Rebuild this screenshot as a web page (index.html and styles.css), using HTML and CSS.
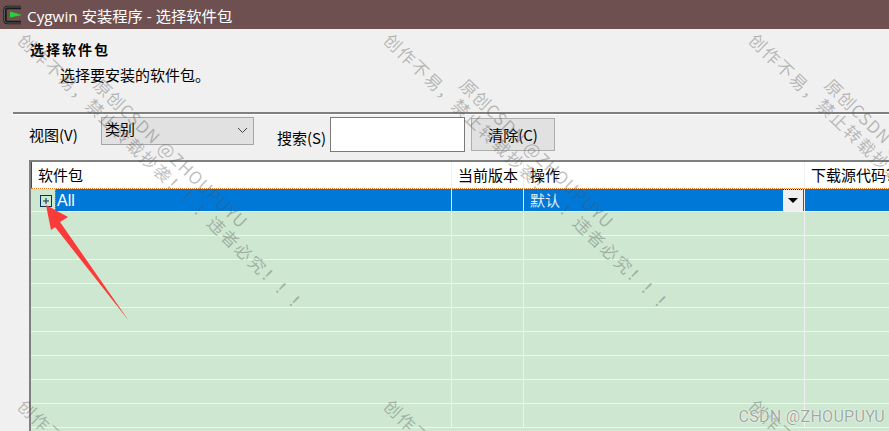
FILE: index.html
```html
<!DOCTYPE html>
<html lang="zh-CN">
<head>
<meta charset="utf-8">
<title>Cygwin 安装程序 - 选择软件包</title>
<link rel="stylesheet" href="styles.css">
</head>
<body>
<div class="window">
  <header class="titlebar">
    <svg class="app-icon" width="20" height="20" viewBox="0 0 20 20" aria-hidden="true">
      <path d="M18 2.500H4.500Q2 2.500 2 5V15Q2 17.500 4.500 17.500H18" fill="none" stroke="#1a1a1a" stroke-width="3.400"/>
      <path d="M18 2H4.500Q1.500 2 1.500 5V15Q1.500 18 4.500 18H18" fill="none" stroke="#6a6a6a" stroke-width="0.800"/>
      <path d="M7 6.500L19 10L7 12.500Z" fill="#27d13a"/>
    </svg>
    <span class="title-text">Cygwin 安装程序 - 选择软件包</span>
  </header>
  <section class="intro">
    <h1 class="intro-title">选择软件包</h1>
    <p class="intro-sub">选择要安装的软件包。</p>
  </section>
  <div class="toolbar">
    <label class="label-view">视图(V)</label>
    <div class="select">
      <span class="select-value">类别</span>
      <svg class="chevron" width="11" height="7" viewBox="0 0 11 7" aria-hidden="true"><path d="M1 1L5.500 5.500L10 1" fill="none" stroke="#444" stroke-width="1"/></svg>
    </div>
    <label class="label-search">搜索(S)</label>
    <input class="search" type="text">
    <button class="clear" type="button">清除(C)</button>
  </div>
  <div class="table">
    <div class="row head">
      <div class="cell first">软件包</div>
      <div class="cell">当前版本</div>
      <div class="cell">操作</div>
      <div class="cell last">下载源代码?</div>
    </div>
    <div class="row selected">
      <div class="cell first">
        <span class="gutter"><svg width="12" height="12" viewBox="0 0 12 12" aria-hidden="true"><rect x="0.500" y="0.500" width="11" height="11" fill="none" stroke="#04325e"/><path d="M6 3V9M3 6H9" stroke="#04325e"/></svg></span>
        <span class="all">All</span>
      </div>
      <div class="cell"></div>
      <div class="cell action"><span>默认</span><span class="drop"><i class="tri"></i></span></div>
      <div class="cell last"></div>
    </div>
    <div class="row"><div class="cell"></div><div class="cell"></div><div class="cell"></div><div class="cell"></div></div>
    <div class="row"><div class="cell"></div><div class="cell"></div><div class="cell"></div><div class="cell"></div></div>
    <div class="row"><div class="cell"></div><div class="cell"></div><div class="cell"></div><div class="cell"></div></div>
    <div class="row"><div class="cell"></div><div class="cell"></div><div class="cell"></div><div class="cell"></div></div>
    <div class="row"><div class="cell"></div><div class="cell"></div><div class="cell"></div><div class="cell"></div></div>
    <div class="row"><div class="cell"></div><div class="cell"></div><div class="cell"></div><div class="cell"></div></div>
    <div class="row"><div class="cell"></div><div class="cell"></div><div class="cell"></div><div class="cell"></div></div>
    <div class="row"><div class="cell"></div><div class="cell"></div><div class="cell"></div><div class="cell"></div></div>
    <div class="row"><div class="cell"></div><div class="cell"></div><div class="cell"></div><div class="cell"></div></div>
  </div>
</div>

<svg class="arrow" width="889" height="431" viewBox="0 0 889 431" aria-hidden="true">
  <polygon points="46,205 68,217 60,222 129,321 55,227 51,230" fill="#fb3a3a"/>
</svg>

<div class="mark m1"><div class="mark-b">原创CSDN @ZHOUPUYU</div><div>创作不易，禁止转载抄袭！！！违者必究！！！</div></div>
<div class="mark m2"><div class="mark-b">原创CSDN @ZHOUPUYU</div><div>创作不易，禁止转载抄袭！！！违者必究！！！</div></div>
<div class="mark m3"><div class="mark-b">原创CSDN @ZHOUPUYU</div><div>创作不易，禁止转载抄袭！！！违者必究！！！</div></div>
<div class="mark m4"><div class="mark-b">原创CSDN @ZHOUPUYU</div><div>创作不易，禁止转载抄袭！！！违者必究！！！</div></div>
<div class="mark m5"><div class="mark-b">原创CSDN @ZHOUPUYU</div><div>创作不易，禁止转载抄袭！！！违者必究！！！</div></div>
<div class="mark m6"><div class="mark-b">原创CSDN @ZHOUPUYU</div><div>创作不易，禁止转载抄袭！！！违者必究！！！</div></div>
<div class="csdn">CSDN @ZHOUPUYU</div>
</body>
</html>
```
FILE: styles.css
```css
* { box-sizing: border-box; }
html, body { margin: 0; height: 431px; overflow: hidden; }
body {
  position: relative;
  background: #f0f0f0;
  font-family: "Noto Sans CJK SC", sans-serif;
  font-size: 15px;
  color: #000;
}
.window { display: flex; flex-direction: column; height: 431px; overflow: hidden; }

.titlebar {
  flex: none;
  height: 29px;
  background: #6f5051;
  display: flex;
  align-items: center;
  padding-left: 3px;
  color: #fff;
}
.app-icon { flex: none; margin-right: 4px; }
.title-text { font-family: "Open Sans", "Noto Sans CJK SC", sans-serif; font-size: 15.300px; }

.intro { flex: none; height: 83px; padding: 10px 0 0 30px; }
.intro-title { margin: 0; font-size: 14px; line-height: 20px; font-weight: 700; letter-spacing: 2px; }
.intro-sub { margin: 6px 0 0 30px; font-size: 15px; line-height: 20px; }

.toolbar {
  flex: none;
  height: 48px;
  margin-left: 13px;
  border-top: 2px solid #7f7f7f;
  box-shadow: inset 0 1px 0 #fff;
  display: flex;
  align-items: flex-start;
}
.label-view { margin: 11px 0 0 16px; width: 72px; line-height: 20px; }
.select {
  width: 153px;
  height: 28px;
  margin-top: 3px;
  background: #e1e1e1;
  border: 1px solid #a6a6a6;
  padding: 0 0 0 3px;
  display: flex;
  justify-content: space-between;
  align-items: center;
}
.select-value { line-height: 20px; padding-bottom: 4px; }
.chevron { margin-right: 5px; margin-bottom: 2px; }
.label-search { margin: 14px 0 0 23px; width: 53px; line-height: 20px; white-space: nowrap; }
.search {
  width: 135px;
  height: 35px;
  margin-top: 3px;
  background: #fff;
  border: 1px solid #7a7a7a;
  padding: 0;
}
.clear {
  width: 84px;
  height: 33px;
  margin: 4px 0 0 6px;
  background: #e1e1e1;
  border: 1px solid #adadad;
  padding: 0;
  font: inherit;
  color: #000;
}

.table {
  flex: 1;
  margin-left: 29px;
  border-top: 2px solid #7f7f7f;
  border-left: 2px solid #7f7f7f;
  background: #cde7d0;
  overflow: hidden;
}
.row {
  display: grid;
  grid-template-columns: 421px 72px 281px 1fr;
  height: 24px;
  border-bottom: 1px solid #f0f5f0;
}
.cell {
  border-right: 1px solid #f0f0f0;
  min-width: 0;
}
.cell:last-child { border-right: 0; }

.head {
  height: 27px;
  background: #fff;
  border-bottom: 1px dotted #f07a1f;
}
.head .cell {
  padding-left: 6px;
  line-height: 25px;
  white-space: nowrap;
  overflow: hidden;
}
.head .first { border-left: 1px solid #4a4a4a; }

.selected { height: 23px; grid-template-rows: 22px; }
.selected .cell { background: #0078d7; color: #fff; }
.selected .first { background: transparent; display: flex; }
.gutter {
  flex: none;
  width: 24px;
  padding: 6px 0 0 9px;
}
.gutter svg { display: block; }
.all {
  flex: 1;
  height: 22px;
  background: #0078d7;
  border-left: 1px dotted #f07a1f;
  padding: 1px 0 0 1px;
  font-family: "Liberation Sans", sans-serif;
  font-size: 16px;
  line-height: 21px;
}
.action {
  display: flex;
  justify-content: space-between;
  padding-left: 6px;
  line-height: 22px;
}
.selected .action { color: #e3f0fb; }
.drop {
  width: 21px;
  height: 22px;
  background: #f0f0f0;
  border-top: 1px dotted #000;
  border-right: 1px solid #555;
  display: flex;
  align-items: center;
  justify-content: center;
}
.tri {
  width: 0;
  height: 0;
  border-left: 5px solid transparent;
  border-right: 5px solid transparent;
  border-top: 5px solid #000;
}

.arrow { position: absolute; left: 0; top: 0; pointer-events: none; }

.mark {
  position: absolute;
  transform: rotate(44deg);
  transform-origin: 0 0;
  color: rgba(85, 85, 85, 0.38);
  font-size: 17px;
  line-height: 22.500px;
  letter-spacing: 1.800px;
  white-space: nowrap;
  pointer-events: none;
}
.mark-b { margin: 3px 0 -3px 86px; letter-spacing: 1px; }
.m1 { left: 45px; top: 12px; }
.m2 { left: 411px; top: 12px; }
.m3 { left: 776px; top: 12px; }
.m4 { left: 45px; top: 378px; }
.m5 { left: 411px; top: 378px; }
.m6 { left: 776px; top: 378px; }

.csdn {
  position: absolute;
  right: 4px;
  bottom: 5px;
  font-family: Roboto, sans-serif;
  font-size: 16px;
  line-height: 18px;
  letter-spacing: 0.300px;
  color: rgba(130, 140, 130, 0.75);
  text-shadow: 0 0 2px #fff, 0 0 1px #fff;
}
```
